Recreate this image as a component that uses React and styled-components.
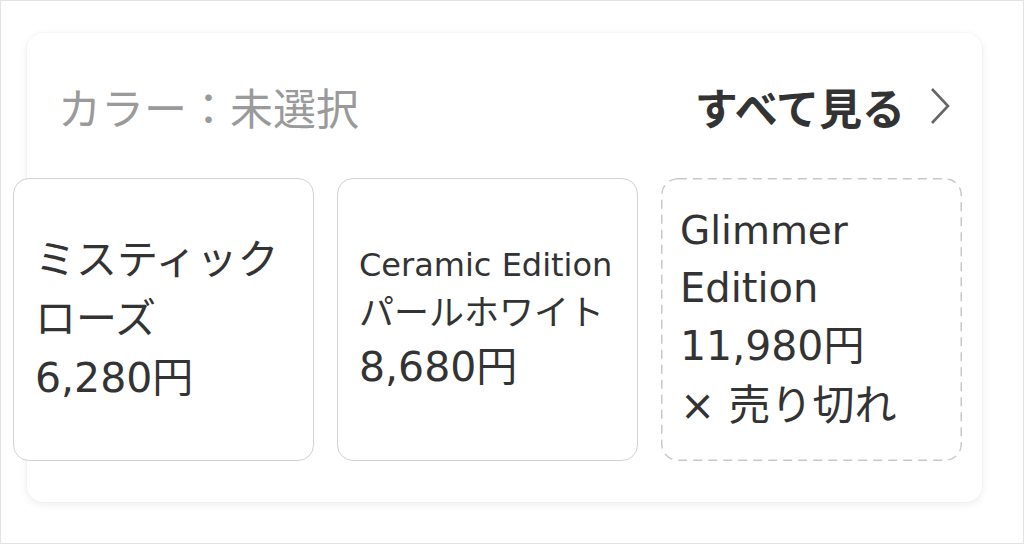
import React from "react";
import styled, { createGlobalStyle } from "styled-components";

const GlobalStyle = createGlobalStyle`
    html, body {
        margin: 0;
        padding: 0;
        background: #fff;
    }
    body {
        font-family: "Noto Sans CJK JP", "Noto Sans", sans-serif;
        color: #333;
    }
`;

const dashedFrame =
    "data:image/svg+xml," +
    encodeURIComponent(
        "<svg xmlns='http://www.w3.org/2000/svg' width='301' height='283' viewBox='0 0 301 283'>" +
            "<rect x='0.75' y='0.75' width='299.5' height='281.5' rx='16' ry='16' fill='none' stroke='#c8c8c8' stroke-width='1.5' stroke-dasharray='9 6'/>" +
            "</svg>"
    );

const Page = styled.div`
    width: 1024px;
    height: 544px;
    box-sizing: border-box;
    border: 1px solid #e3e3e3;
    padding: 32px 0 0 26px;
    overflow: hidden;
`;

const Panel = styled.section`
    width: 955px;
    height: 469px;
    box-sizing: border-box;
    background: #fff;
    border-radius: 16px;
    box-shadow: 0 2px 8px rgba(0, 0, 0, 0.08), 0 0 2px rgba(0, 0, 0, 0.05);
    display: flex;
    flex-direction: column;
`;

const Header = styled.div`
    height: 145px;
    display: flex;
    align-items: center;
    justify-content: space-between;
    padding: 0 31px 0 31px;
    box-sizing: border-box;
`;

const Title = styled.span`
    font-size: 43px;
    color: #9a9a9a;
`;

const SeeAll = styled.a`
    display: flex;
    align-items: center;
    gap: 24px;
    font-size: 43px;
    font-weight: 700;
    color: #333;
    text-decoration: none;
`;

const Options = styled.div`
    display: flex;
    gap: 23px;
    margin-left: -14px;
`;

const Option = styled.div`
    width: 301px;
    height: 283px;
    flex: none;
    box-sizing: border-box;
    border: ${(p) => (p.$soldOut ? "none" : "1.5px solid #d2d2d2")};
    background: ${(p) => (p.$soldOut ? `url("${dashedFrame}") no-repeat` : "#fff")};
    border-radius: 16px;
    padding: 0 18px 0 ${(p) => (p.$soldOut ? 19 : 21)}px;
    display: flex;
    flex-direction: column;
    justify-content: center;
    font-family: "DejaVu Sans", "Noto Sans CJK JP", sans-serif;
    color: #333;
`;

const Line = styled.div`
    white-space: nowrap;
    font-size: ${(p) => p.$size}px;
    line-height: ${(p) => Math.round(p.$size * 1.44)}px;
`;

const Chevron = () => (
    <svg width="22" height="38" viewBox="0 0 22 38">
        <polyline
            points="3,2 19,19 3,36"
            fill="none"
            stroke="#666"
            strokeWidth="2.6"
        />
    </svg>
);

const colors = [
    {
        lines: [
            ["ミスティック", 41],
            ["ローズ", 41],
            ["6,280円", 41]
        ]
    },
    {
        lines: [
            ["Ceramic Edition", 32],
            ["パールホワイト", 35],
            ["8,680円", 41]
        ]
    },
    {
        lines: [
            ["Glimmer", 39],
            ["Edition", 40],
            ["11,980円", 41],
            ["× 売り切れ", 42]
        ],
        soldOut: true
    }
];

export default function App() {
    return (
        <>
            <GlobalStyle />
            <Page>
                <Panel>
                    <Header>
                        <Title>カラー：未選択</Title>
                        <SeeAll href="#">
                            すべて見る
                            <Chevron />
                        </SeeAll>
                    </Header>
                    <Options>
                        {colors.map((c, i) => (
                            <Option key={i} $soldOut={c.soldOut}>
                                {c.lines.map(([text, size]) => (
                                    <Line key={text} $size={size}>
                                        {text}
                                    </Line>
                                ))}
                            </Option>
                        ))}
                    </Options>
                </Panel>
            </Page>
        </>
    );
}
